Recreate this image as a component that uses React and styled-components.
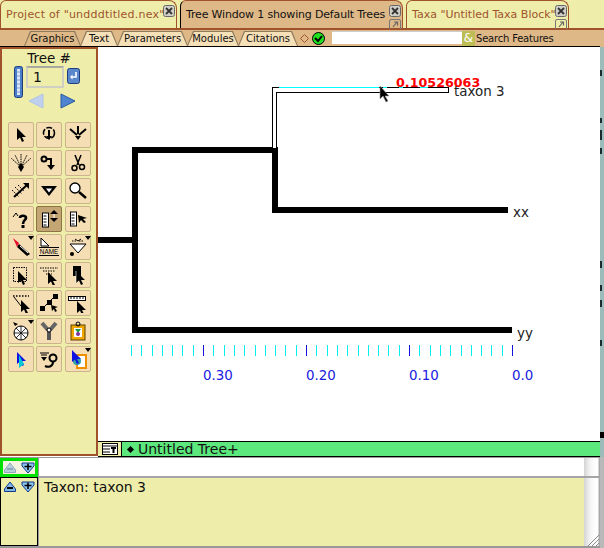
import React from "react";
import styled, { createGlobalStyle } from "styled-components";

const Global = createGlobalStyle`
  html, body { margin: 0; padding: 0; background: #fff; }
  body { font-family: "DejaVu Sans", sans-serif; }
`;

const yellow = "#eeeeaa";
const tan = "#deb887";
const sienna = "#a0522d";
const wheat = "#f5deb3";

const Page = styled.div`
  width: 604px;
  height: 548px;
  display: flex;
  overflow: hidden;
`;

const Main = styled.div`
  width: 600px;
  display: flex;
  flex-direction: column;
`;

const RightStrip = styled.div`
  position: relative;
  width: 4px;
  background: linear-gradient(to bottom, ${yellow} 0 28px, ${sienna} 28px 30px, ${tan} 30px 47px, #9bbcb8 47px 432px, #000 432px 438px, #9bbcb8 438px 457px, #b9b9b9 457px);
  overflow: hidden;
`;

const Speck = styled.span`
  position: absolute;
  left: 0;
  top: ${(p) => p.$top}px;
  width: 2px;
  height: ${(p) => p.$h}px;
  background: #1a2a30;
`;

const TabStrip = styled.div`
  height: 28px;
  background: ${yellow};
  display: flex;
  gap: 3px;
`;

const Tab = styled.div`
  width: ${(p) => p.$w}px;
  box-sizing: border-box;
  position: relative;
  display: flex;
  align-items: center;
  padding: 0 0 1px ${(p) => p.$pad}px;
  font-size: 11px;
  letter-spacing: ${(p) => p.$track || 0}px;
  white-space: nowrap;
  color: ${(p) => (p.$active ? "#111" : sienna)};
  background: ${(p) => (p.$active ? tan : yellow)};
  border: 1px solid ${sienna};
  border-bottom: none;
  border-left-color: ${(p) => (p.$active ? "#000" : sienna)};
  border-radius: 6px 8px 0 0;
`;

const TabIcons = styled.div`
  position: absolute;
  right: 1px;
  top: 4px;
  display: flex;
  flex-direction: column;
  gap: 2px;
`;

const FeatureBar = styled.div`
  height: 19px;
  box-sizing: border-box;
  background: ${tan};
  border-top: 2px solid ${sienna};
  border-bottom: 1px solid #000;
  padding: 1px 0 0 24px;
  display: flex;
  align-items: stretch;
  font-size: 10px;
  color: #111;
`;

const FeatureTab = styled.div`
  position: relative;
  width: ${(p) => p.$w}px;
  margin-right: -1px;
  display: flex;
  align-items: center;
  justify-content: center;
  &::before, &::after {
    content: "";
    position: absolute;
    clip-path: polygon(0 100%, 6px 0, calc(100% - 6px) 0, 100% 100%);
  }
  &::before { inset: 0; background: #8d7a5c; }
  &::after { inset: 1px 1px 0 1px; background: ${(p) => (p.$active ? tan : "#f6e0b8")}; }
`;

const FeatureLabel = styled.span`
  position: relative;
  z-index: 1;
`;

const FeatureTools = styled.div`
  display: flex;
  align-items: center;
  gap: 3px;
  margin-left: 3px;
`;

const SearchInput = styled.div`
  width: 130px;
  height: 13px;
  margin-left: 7px;
  background: #fff;
  box-shadow: inset 0 1px 0 #ccc;
`;

const SearchAmp = styled.div`
  width: 13px;
  height: 15px;
  background: #bdbd55;
  color: #fff;
  font-size: 12px;
  line-height: 15px;
  text-align: center;
`;

const SearchLabel = styled.span`
  margin-left: 1px;
  align-self: center;
  letter-spacing: -0.2px;
`;

const Workspace = styled.div`
  height: 410px;
  display: flex;
`;

const LeftPanel = styled.div`
  width: 98px;
  height: 409px;
  box-sizing: border-box;
  background: ${yellow};
  border: 2px solid ${sienna};
  display: flex;
  flex-direction: column;
  align-items: center;
`;

const TreeLabel = styled.div`
  font-size: 13.5px;
  line-height: 16px;
  margin-top: 1px;
  color: #111;
`;

const TreeControls = styled.div`
  display: grid;
  grid-template-columns: 9px 38px 13px;
  grid-template-rows: 22px 24px;
  column-gap: 3px;
  align-self: flex-start;
  margin-left: 12px;
`;

const Scroller = styled.svg`
  grid-row: 1 / span 2;
  width: 9px;
  height: 32px;
`;

const NumberField = styled.div`
  box-sizing: border-box;
  width: 38px;
  height: 22px;
  border: 2px solid #cfcfc4;
  border-top-color: #a9a9a0;
  background: ${yellow};
  font-size: 14px;
  line-height: 19px;
  padding-left: 5px;
  color: #111;
`;

const EnterButton = styled.svg`
  width: 13px;
  height: 16px;
  margin-top: 2px;
`;

const Arrows = styled.div`
  grid-column: 2 / span 2;
  display: flex;
  gap: 16px;
  margin-top: 5px;
  padding-left: 2px;
`;

const ToolGrid = styled.div`
  display: grid;
  grid-template-columns: repeat(3, 26px);
  grid-auto-rows: 26px;
  gap: 2px 2.5px;
  margin-top: 10px;
`;

const Tool = styled.div`
  position: relative;
  box-sizing: border-box;
  border: 1px solid ${(p) => (p.$active ? "#8c7444" : "#cbb48c")};
  border-radius: 2px;
  background: ${(p) => (p.$active ? "#c4a574" : wheat)};
  display: flex;
  align-items: center;
  justify-content: center;
  ${(p) =>
    p.$menu &&
    `&::after {
      content: "";
      position: absolute;
      top: 1px;
      right: -1px;
      border-left: 3.5px solid transparent;
      border-right: 3.5px solid transparent;
      border-top: 4px solid #000;
    }`}
`;

const RightColumn = styled.div`
  flex: 1;
  display: flex;
  flex-direction: column;
`;

const Canvas = styled.svg`
  display: block;
  width: 502px;
  height: 394px;
  background: #fff;
`;

const StatusBar = styled.div`
  height: 16px;
  box-sizing: border-box;
  display: flex;
  background: #5ce87c;
  border-top: 1px solid #000;
  border-bottom: 1px solid #000;
  font-size: 14px;
  line-height: 13px;
  color: #111;
`;

const StatusIcon = styled.div`
  width: 24px;
  background: ${yellow};
  border-right: 1px solid #000;
  box-sizing: border-box;
  display: flex;
  align-items: center;
  justify-content: center;
`;

const StatusText = styled.div`
  display: flex;
  align-items: center;
  gap: 5px;
  padding-left: 6px;
  white-space: nowrap;
`;

const Diamond = styled.span`
  width: 5px;
  height: 5px;
  background: #000;
  transform: rotate(45deg);
`;

const Bottom = styled.div`
  flex: 1;
  display: flex;
  border-top: 1px solid #999;
  border-bottom: 2px solid #999;
`;

const LogButtons = styled.div`
  width: 38px;
  display: flex;
  flex-direction: column;
`;

const ButtonBox = styled.div`
  box-sizing: border-box;
  height: ${(p) => p.$h}px;
  flex: ${(p) => (p.$grow ? 1 : "none")};
  border: ${(p) => (p.$green ? "3px solid #00e000" : "1px solid #000")};
  background: ${(p) => (p.$green ? "#f3f3e0" : yellow)};
  display: flex;
  align-items: flex-start;
  gap: 5px;
  padding: ${(p) => (p.$green ? "1px 0 0 1px" : "3px 0 0 3px")};
`;

const LogColumn = styled.div`
  flex: 1;
  display: flex;
  flex-direction: column;
  border-left: 1px solid #999;
`;

const InputRow = styled.div`
  height: 18px;
  background: #fff;
  border-bottom: 2px solid #a5a5a5;
`;

const Explanation = styled.div`
  flex: 1;
  background: ${yellow};
  padding: 1px 0 0 5px;
  font-size: 14px;
  line-height: 16px;
  color: #111;
`;

const Gutter = styled.div`
  position: relative;
  width: 16px;
  background: linear-gradient(to right, #d4d4d4, #f4f4f4 6px, #fff 12px, #fff 14px, #a8a8a8 15px);
`;

const GutterLine = styled.div`
  height: 18px;
  border-bottom: 2px solid #a5a5a5;
`;

const Grip = styled.svg`
  position: absolute;
  right: 1px;
  bottom: 0;
  width: 12px;
  height: 12px;
`;

const CloseBox = () => (
  <svg width="12" height="12" viewBox="0 0 12 12">
    <rect x=".5" y=".5" width="11" height="11" rx="2" fill="#cfcfc8" stroke="#666" />
    <path d="M3 3l6 6M9 3l-6 6" stroke="#333" strokeWidth="1.8" />
  </svg>
);

const PopBox = () => (
  <svg width="12" height="10" viewBox="0 0 12 10">
    <path d="M.5 10V2a1.5 1.5 0 0 1 1.5-1.5h8A1.5 1.5 0 0 1 11.5 2v8" fill="none" stroke="#777" />
    <path d="M4 8l4-5M5 3h3.5v3.5" fill="none" stroke="#666" strokeWidth="1.2" />
  </svg>
);

const ZoomOut = ({ faded }) => (
  <svg width="12" height="12" viewBox="0 0 12 12">
    <path d="M.5 10.5h11V8L6 1 .5 8z" fill={faded ? "#b9cfdc" : "#7fb6e6"} stroke={faded ? "#8fa8b8" : "#123a8a"} strokeLinejoin="round" />
    <rect x="3" y="6" width="6" height="2" fill={faded ? "#8fa8b8" : "#000"} />
  </svg>
);

const ZoomIn = () => (
  <svg width="14" height="12" viewBox="0 0 14 12">
    <path d="M1 1h12V4L7 11 1 4z" fill="#8cc4f0" stroke="#123a8a" strokeLinejoin="round" />
    <path d="M3.500 4.500h7M7 1.500v6.500" stroke="#000" strokeWidth="1.6" />
  </svg>
);

const arrow = (x, y, fill = "#000") => (
  <path d={`M${x} ${y}v12l3-2.5 2 4.5 2-1-2-4h4z`} fill={fill} />
);

const ruler = (x, y) => (
  <g>
    <rect x={x} y={y} width="6" height="14" fill="#fff" stroke="#000" />
    <path d={`M${x + 1} ${y + 3}h3M${x + 1} ${y + 6}h3M${x + 1} ${y + 9}h3M${x + 1} ${y + 12}h3`} stroke="#000" />
  </g>
);

const toolIcons = [
  { icon: arrow(6, 3) },
  {
    icon: (
      <g>
        <circle cx="10" cy="8" r="5.500" fill="none" stroke="#000" strokeWidth="1.5" strokeDasharray="6 1.5" />
        <path d="M9 5h2v6h2l-3 4-3-4h2z" fill="#000" />
      </g>
    ),
  },
  {
    icon: (
      <g>
        <path d="M2 4l7 6M18 4l-7 6M10 1v8" stroke="#000" strokeWidth="2" />
        <path d="M7 11h6l-3 4z" fill="#000" />
      </g>
    ),
  },
  {
    icon: (
      <g>
        <path d="M10 14L0 5M10 14L4 2M10 14V1M10 14l6-12M10 14l10-9" stroke="#000" strokeDasharray="1.5 .8" />
        <path d="M10 10l3 4-3 5-3-5z" fill="#000" />
      </g>
    ),
  },
  {
    icon: (
      <g>
        <circle cx="5" cy="6" r="2.500" fill="none" stroke="#000" strokeWidth="2" />
        <path d="M7 6h5v7" fill="none" stroke="#000" strokeWidth="2" />
        <path d="M8 12h8l-4 5z" fill="#000" />
      </g>
    ),
  },
  {
    icon: (
      <g>
        <path d="M7 2l4 10M13 2l-4 10" stroke="#000" strokeWidth="1.5" />
        <circle cx="6.500" cy="15" r="2.500" fill="none" stroke="#000" strokeWidth="1.5" />
        <circle cx="14" cy="14" r="2.500" fill="none" stroke="#000" strokeWidth="1.5" />
      </g>
    ),
  },
  {
    icon: (
      <g>
        <path d="M3 16L16 4" stroke="#000" strokeWidth="2" />
        <path d="M12 2h6v6z" fill="#000" />
        <path d="M1 9l7 7M4 6l7 7M7 4l6 6" stroke="#000" strokeDasharray="1.5 1" />
      </g>
    ),
  },
  {
    icon: (
      <g>
        <path d="M2 5h16l-8 10z" fill="#000" />
        <path d="M7 7.500h6l-3 4z" fill="#fff" />
      </g>
    ),
  },
  {
    icon: (
      <g>
        <circle cx="7" cy="7" r="5" fill="#fff" stroke="#000" strokeWidth="1.3" />
        <path d="M11 11l7 6" stroke="#000" strokeWidth="2.4" />
      </g>
    ),
  },
  {
    icon: (
      <g>
        <path d="M9 9c0-3 6-3 6 0 0 2-3 2-3 6" fill="none" stroke="#000" strokeWidth="2.6" />
        <rect x="10.500" y="16" width="3" height="3" fill="#000" />
        <path d="M2 8l3-4 2 3" fill="none" stroke="#000" />
      </g>
    ),
  },
  {
    active: true,
    icon: (
      <g>
        {ruler(3.5, 4)}
        <path d="M15 1l4 4h-8zM15 13l4-4h-8z" fill="#000" />
        <path d="M15 5v4" stroke="#fff" />
      </g>
    ),
  },
  {
    icon: (
      <g>
        {ruler(2.5, 3)}
        <path d="M10 6l9 3-4 1 3 3-2 1-3-3-2 3z" fill="#000" />
      </g>
    ),
  },
  {
    menu: true,
    icon: (
      <g>
        <path d="M8 7l11 10-3 2L6 10z" fill="#000" />
        <path d="M9 9l8 7" stroke="#fff" />
        <path d="M2 1l6 5-2 4z" fill="#e8102c" />
      </g>
    ),
  },
  {
    icon: (
      <g>
        <path d="M2 1v8h8z" fill="#fff" stroke="#000" />
        <path d="M0 10.500h20M0 18.500h20" stroke="#000" />
        <text x="10" y="17" textAnchor="middle" fontSize="6.4" fontFamily="'Liberation Sans', sans-serif" fill="#000">NAME</text>
      </g>
    ),
  },
  {
    menu: true,
    icon: (
      <g>
        <path d="M2 7h16l-8 9z" fill="#fff" stroke="#000" />
        <path d="M4 4h4M11 4h5" stroke="#000" strokeDasharray="1.5 1" />
        <path d="M7 2l3 2 3-2" fill="none" stroke="#000" />
        <circle cx="4" cy="17" r="2" fill="#000" />
      </g>
    ),
  },
  {
    icon: (
      <g>
        <rect x="2.500" y="2.500" width="13" height="14" fill="none" stroke="#000" strokeDasharray="1.5 1" />
        {arrow(7, 6)}
      </g>
    ),
  },
  {
    icon: (
      <g>
        <path d="M1 3h18M4 6h12M7 9h6" stroke="#000" strokeDasharray="1.5 1" />
        {arrow(9, 7)}
      </g>
    ),
  },
  {
    icon: (
      <g>
        <rect x="5" y="1" width="8" height="10" fill="#000" />
        {arrow(8, 6)}
        <path d="M8 6v12" stroke="#fff" strokeWidth=".6" />
      </g>
    ),
  },
  {
    icon: (
      <g>
        <path d="M2 3h16" stroke="#000" strokeWidth="1.5" strokeDasharray="1.5 1.5" />
        <path d="M3 4l7 9" stroke="#000" />
        {arrow(10, 7)}
      </g>
    ),
  },
  {
    icon: (
      <g>
        <path d="M4 15L15 4" stroke="#000" />
        <rect x="1" y="13" width="5" height="5" fill="#000" />
        <rect x="8" y="7" width="5" height="5" fill="#000" />
        <rect x="14" y="1" width="5" height="5" fill="#000" />
        <path d="M12 12l7 2-3 1 2 3-2 1-1-3-2 2z" fill="#000" />
      </g>
    ),
  },
  {
    icon: (
      <g>
        <rect x="0" y="3" width="18" height="5" fill="#000" />
        <rect x="1" y="4" width="16" height="3" fill="#fff" />
        <path d="M3 4v2M6 4v2M9 4v2M12 4v2M15 4v2" stroke="#000" />
        {arrow(9, 8)}
      </g>
    ),
  },
  {
    menu: true,
    icon: (
      <g>
        <circle cx="10" cy="12" r="7" fill="#fff" stroke="#000" />
        <path d="M3 12h14M10 5v14M5 7l10 10M15 7L5 17" stroke="#000" strokeWidth=".8" />
        <path d="M2 1l5 2-3 2z" fill="#000" />
      </g>
    ),
  },
  {
    icon: (
      <g>
        <path d="M3 2l6 7M17 2l-6 7" stroke="#666" strokeWidth="4" />
        <rect x="8" y="9" width="4" height="10" fill="#555" />
        <circle cx="10" cy="9" r="2" fill="#fff" stroke="#000" />
      </g>
    ),
  },
  {
    icon: (
      <g>
        <rect x="3" y="4" width="14" height="15" fill="#f0a800" stroke="#5a4200" />
        <rect x="6" y="7" width="8" height="9" fill="#fff" />
        <path d="M7 8h6l-3 4z" fill="#1a9a40" />
        <circle cx="10" cy="13" r="2" fill="#8030a0" />
        <circle cx="10" cy="3" r="2" fill="none" stroke="#000" />
      </g>
    ),
  },
  { icon: arrow(6, 3, "#1010e0"), extra: <path d="M8 6l5 9-5 4z" fill="#00c8d8" /> },
  {
    icon: (
      <g>
        <circle cx="14" cy="9" r="3.500" fill="none" stroke="#000" strokeWidth="2" />
        <path d="M14 13c0 4-4 6-8 4" fill="none" stroke="#000" strokeWidth="2" />
        <path d="M1 4h9M2 6h6" stroke="#000" />
        <path d="M2 8h6l-3 4z" fill="#000" />
      </g>
    ),
  },
  {
    menu: true,
    icon: (
      <g>
        <rect x="9" y="6" width="9" height="13" fill="#fff" stroke="#f09000" strokeWidth="2" />
        <circle cx="9" cy="12" r="4" fill="#30a0a0" />
        {arrow(4, 1, "#1010e0")}
      </g>
    ),
  },
];

const tabs = [
  { label: 'Project of "undddtitled.nex"', w: 177, pad: 5, track: 0.22 },
  { label: "Tree Window 1 showing Default Trees", w: 223, pad: 5, active: true, pop: true, track: -0.17 },
  { label: 'Taxa "Untitled Taxa Block"', w: 163, pad: 5, pop: true },
];

const features = [
  { label: "Graphics", w: 57, active: true },
  { label: "Text", w: 38 },
  { label: "Parameters", w: 71 },
  { label: "Modules", w: 52 },
  { label: "Citations", w: 60 },
];

const ticks = Array.from({ length: 38 }, (_, k) => k);
const scaleLabels = [
  { x: 203, t: "0.30" },
  { x: 306, t: "0.20" },
  { x: 409, t: "0.10" },
  { x: 512, t: "0.0" },
];

const Bar = ({ x, y, w, h }) => <rect x={x} y={y} width={w} height={h} fill="#000" shapeRendering="crispEdges" />;

const TreeChart = () => (
  <Canvas viewBox="98 47 502 394">
    <Bar x={98} y={237} w={36} h={6} />
    <Bar x={132} y={147} w={6} h={186} />
    <Bar x={132} y={147} w={146} h={6} />
    <Bar x={272} y={147} w={6} h={66} />
    <Bar x={272} y={207} w={236} h={6} />
    <Bar x={132} y={327} w={380} h={6} />
    <path
      d="M272.5 148V87.5H448.5V92.5H276.5V148"
      fill="#fff"
      stroke="#000"
      shapeRendering="crispEdges"
    />
    <path d="M279 87.5H379M383 87.5H387M399 87.5H403M420 87.5H428" stroke="#00ffff" shapeRendering="crispEdges" />
    <text x="396" y="87" fontSize="12.7" fontWeight="700" fill="#ff0000" fontFamily="'DejaVu Sans', sans-serif">0.10526063</text>
    <g fontSize="13.4" fill="#222" fontFamily="'DejaVu Sans', sans-serif">
      <text x="454" y="96">taxon 3</text>
      <text x="513" y="217">xx</text>
      <text x="517" y="338">yy</text>
    </g>
    <path d="M380 86v13l3-3 3 6 2-1-3-5h4z" fill="#000" stroke="#999" strokeWidth=".6" />
    {ticks.map((k) => (
      <rect
        key={k}
        x={Math.round(512 - k * 10.3)}
        y={345}
        width={1}
        height={11}
        fill={k % 10 === 0 ? "#1010e0" : "#00eeee"}
        shapeRendering="crispEdges"
      />
    ))}
    <g fontSize="13.4" fill="#2020e0" fontFamily="'DejaVu Sans', sans-serif">
      {scaleLabels.map((l) => (
        <text key={l.t} x={l.x} y={380}>{l.t}</text>
      ))}
    </g>
  </Canvas>
);

const ToolPalette = () => (
  <ToolGrid>
    {toolIcons.map((t, i) => (
      <Tool key={i} $active={t.active} $menu={t.menu}>
        <svg width="20" height="20" viewBox="0 0 20 20">
          {t.icon}
          {t.extra}
        </svg>
      </Tool>
    ))}
  </ToolGrid>
);

export default function App() {
  return (
    <Page>
      <Global />
      <Main>
        <TabStrip>
          {tabs.map((t) => (
            <Tab key={t.label} $w={t.w} $pad={t.pad} $active={t.active} $track={t.track}>
              {t.label}
              <TabIcons>
                <CloseBox />
                {t.pop && <PopBox />}
              </TabIcons>
            </Tab>
          ))}
        </TabStrip>
        <FeatureBar>
          {features.map((f) => (
            <FeatureTab key={f.label} $w={f.w} $active={f.active}>
              <FeatureLabel>{f.label}</FeatureLabel>
            </FeatureTab>
          ))}
          <FeatureTools>
            <svg width="9" height="9" viewBox="0 0 9 9">
              <path d="M4.500.5l4 4-4 4-4-4z" fill="none" stroke="#a0522d" />
            </svg>
            <svg width="13" height="13" viewBox="0 0 13 13">
              <circle cx="6.500" cy="6.500" r="6" fill="#20e020" stroke="#000" />
              <path d="M3 6l3 3 4-5" fill="none" stroke="#000" strokeWidth="2" />
            </svg>
          </FeatureTools>
          <SearchInput />
          <SearchAmp>&amp;</SearchAmp>
          <SearchLabel>Search Features</SearchLabel>
        </FeatureBar>
        <Workspace>
          <LeftPanel>
            <TreeLabel>Tree #</TreeLabel>
            <TreeControls>
              <Scroller viewBox="0 0 9 32">
                <rect x=".5" y=".5" width="8" height="31" rx="2" fill="#4a7cc8" stroke="#1d3f80" />
                <rect x="3" y="3" width="3" height="26" fill="#dbe8f8" />
                <path d="M3 6h3M3 10h3M3 14h3M3 18h3M3 22h3M3 26h3" stroke="#7aa0d8" />
              </Scroller>
              <NumberField>1</NumberField>
              <EnterButton viewBox="0 0 13 16">
                <rect x=".5" y=".5" width="12" height="15" rx="2" fill="#5a86cc" stroke="#1d3f80" />
                <path d="M9 4v5H4" fill="none" stroke="#fff" strokeWidth="1.6" />
                <path d="M5.500 6.500v5L3 9z" fill="#fff" />
              </EnterButton>
              <Arrows>
                <svg width="16" height="16" viewBox="0 0 16 16">
                  <path d="M15 1v14L1 8z" fill="#c0d0ee" stroke="#b0c4e4" />
                </svg>
                <svg width="16" height="16" viewBox="0 0 16 16">
                  <path d="M1 1v14l14-7z" fill="#4f84d0" stroke="#2a58a0" />
                </svg>
              </Arrows>
            </TreeControls>
            <ToolPalette />
          </LeftPanel>
          <RightColumn>
            <TreeChart />
            <StatusBar>
              <StatusIcon>
                <svg width="16" height="12" viewBox="0 0 16 12">
                  <rect x=".5" y=".5" width="15" height="11" fill="#fff" stroke="#000" />
                  <path d="M1 3h14M1 6h7M1 9h7" stroke="#000" />
                  <path d="M9 4h5v2h-1.500v4h-2V6H9z" fill="#000" />
                </svg>
              </StatusIcon>
              <StatusText>
                <Diamond />
                Untitled Tree+
              </StatusText>
            </StatusBar>
          </RightColumn>
        </Workspace>
        <Bottom>
          <LogButtons>
            <ButtonBox $h={19} $green>
              <ZoomOut faded />
              <ZoomIn />
            </ButtonBox>
            <ButtonBox $grow>
              <ZoomOut />
              <ZoomIn />
            </ButtonBox>
          </LogButtons>
          <LogColumn>
            <InputRow />
            <Explanation>Taxon: taxon 3</Explanation>
          </LogColumn>
          <Gutter>
            <GutterLine />
            <Grip viewBox="0 0 12 12">
              <path d="M1 12L12 1M5 12l7-7M9 12l3-3" stroke="#888" />
            </Grip>
          </Gutter>
        </Bottom>
      </Main>
      <RightStrip>
        <Speck $top={70} $h={6} />
        <Speck $top={118} $h={5} />
        <Speck $top={130} $h={10} />
        <Speck $top={148} $h={6} />
        <Speck $top={261} $h={7} />
        <Speck $top={285} $h={6} />
        <Speck $top={300} $h={7} />
        <Speck $top={340} $h={6} />
      </RightStrip>
    </Page>
  );
}
